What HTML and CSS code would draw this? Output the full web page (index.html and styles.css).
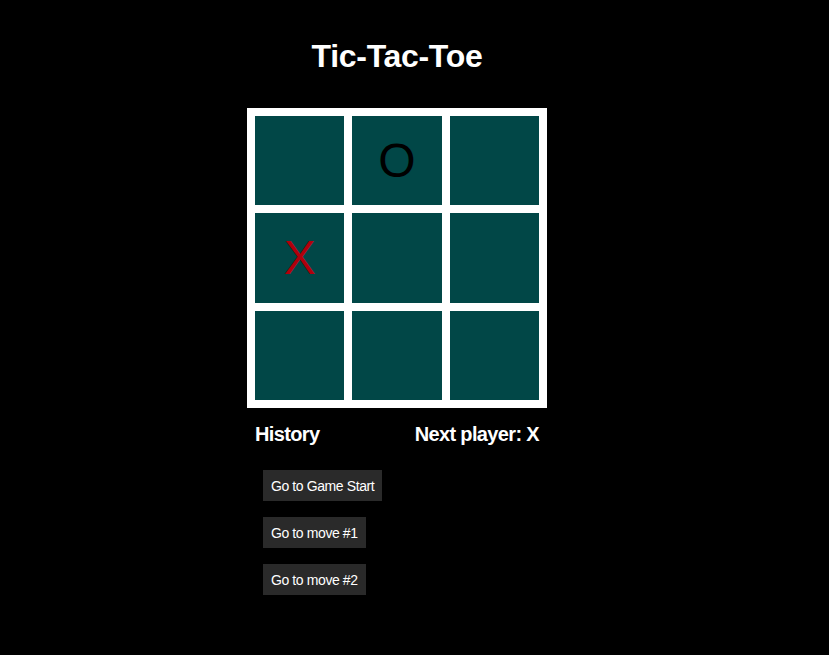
FILE: index.html
```html
<!DOCTYPE html>
<html>
<head>
<meta charset="utf-8">
<link rel="stylesheet" href="styles.css">
</head>
<body>
<div class="app">
  <h1 class="title">Tic-Tac-Toe</h1>
  <div class="board">
    <div class="cell"></div>
    <div class="cell o">O</div>
    <div class="cell"></div>
    <div class="cell x">X</div>
    <div class="cell"></div>
    <div class="cell"></div>
    <div class="cell"></div>
    <div class="cell"></div>
    <div class="cell"></div>
  </div>
  <div class="info">
    <div class="status-row">
      <span>History</span>
      <span>Next player: X</span>
    </div>
    <ol class="history">
      <li><button class="move">Go to Game Start</button></li>
      <li><button class="move">Go to move #1</button></li>
      <li><button class="move">Go to move #2</button></li>
    </ol>
  </div>
</div>
</body>
</html>
```
FILE: styles.css
```css
html, body {
  margin: 0;
  padding: 0;
  background: #000;
  color: #fff;
  font-family: "Liberation Sans", Arial, sans-serif;
}
.app {
  width: 794px;
  display: flex;
  flex-direction: column;
  align-items: center;
  padding-top: 38px;
}
.title {
  margin: 0;
  font-size: 32px;
  font-weight: bold;
  line-height: 37px;
  letter-spacing: -0.3px;
}
.board {
  margin-top: 33px;
  width: 300px;
  height: 300px;
  box-sizing: border-box;
  background: #fff;
  padding: 8px;
  display: grid;
  grid-template-columns: repeat(3, 1fr);
  grid-template-rows: repeat(3, 1fr);
  gap: 8px;
}
.cell {
  background: #014747;
  display: flex;
  align-items: center;
  justify-content: center;
  font-size: 48px;
  line-height: 1;
}
.cell.o { color: #000; }
.cell.x { color: #b0000c; }
.info {
  width: 300px;
  box-sizing: border-box;
  padding: 0 8px;
  margin-top: 15px;
}
.status-row {
  display: flex;
  justify-content: space-between;
  font-size: 20px;
  font-weight: bold;
  line-height: 23px;
  letter-spacing: -0.65px;
}
.history {
  list-style: none;
  margin: 24px 0 0 0;
  padding: 0 0 0 8px;
  display: flex;
  flex-direction: column;
  align-items: flex-start;
  gap: 16px;
}
.move {
  font-family: "Liberation Sans", Arial, sans-serif;
  font-size: 14px;
  letter-spacing: -0.4px;
  color: #fff;
  background: #2a2a2a;
  border: none;
  height: 31px;
  padding: 0 8px;
  cursor: pointer;
}
```
